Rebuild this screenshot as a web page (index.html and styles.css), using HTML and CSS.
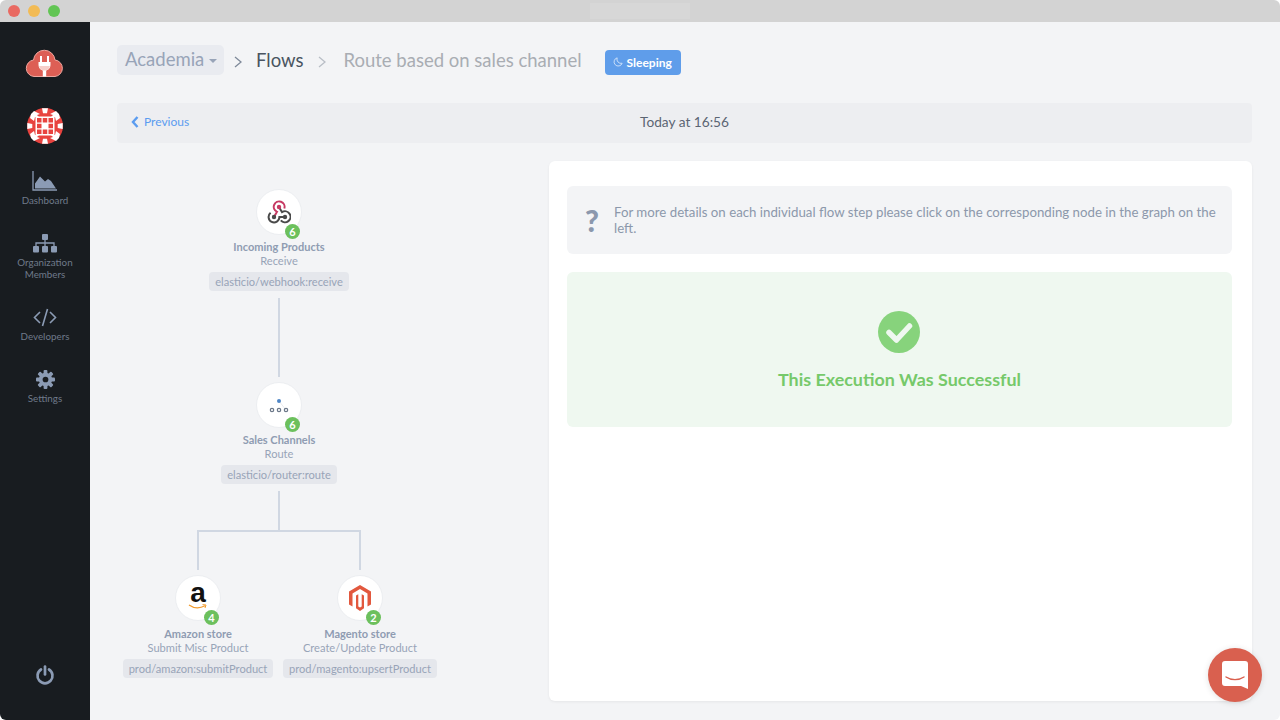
FILE: index.html
```html
<!DOCTYPE html>
<html>
<head>
  <title>Route based on sales channel</title>
  <link rel="stylesheet" href="styles.css">
</head>
<body>
<div class="window">
  <div class="titlebar">
    <span class="light red"></span>
    <span class="light yellow"></span>
    <span class="light green"></span>
    <span class="title-tab"></span>
  </div>

  <div class="app">
    <nav class="sidebar">
      <svg class="logo" viewBox="0 0 40 30" width="40" height="30">
        <path d="M9 28.500A8.300 8.300 0 0 1 8.500 12A10.800 10.800 0 0 1 30 12A8.300 8.300 0 0 1 30 28.500z" fill="#dd5f55" stroke="#f0a79f" stroke-width="1"/>
        <path d="M16 8v6M23 8v6" stroke="#fff" stroke-width="2"/>
        <path d="M13.500 14h12v3a6 6 0 0 1-4.300 5.500v6h-3.400v-6a6 6 0 0 1-4.300-5.500z" fill="#fff"/>
        <path d="M14 18h11a6 6 0 0 1-3.800 4.500h-3.400a6 6 0 0 1-3.800-4.500z" fill="#f6cfca"/>
      </svg>

      <svg class="avatar" viewBox="0 0 36 36" width="36" height="36">
        <circle cx="18" cy="18" r="18" fill="#e8433f"/>
        <g fill="#fff">
          <path d="M7 3l6 3-3 1 3 3-5-1-1 4-4-3 1-4z"/>
          <path d="M29 3l-6 3 3 1-3 3 5-1 1 4 4-3-1-4z"/>
          <path d="M7 33l6-3-3-1 3-3-5 1-1-4-4 3 1 4z"/>
          <path d="M29 33l-6-3 3-1-3-3 5 1 1-4 4 3-1 4z"/>
          <path d="M15 .3h6l-1 5h-4zM15 35.700h6l-1-5h-4zM.3 15v6l5-1v-4zM35.700 15v6l-5-1v-4z"/>
          <rect x="8.500" y="8.500" width="19" height="19" rx="1"/>
        </g>
        <g fill="#e8433f">
          <rect x="10" y="10" width="4.500" height="4.500"/>
          <rect x="15.750" y="10" width="4.500" height="4.500"/>
          <rect x="21.500" y="10" width="4.500" height="4.500"/>
          <rect x="10" y="15.750" width="4.500" height="4.500"/>
          <rect x="21.500" y="15.750" width="4.500" height="4.500"/>
          <rect x="10" y="21.500" width="4.500" height="4.500"/>
          <rect x="15.750" y="21.500" width="4.500" height="4.500"/>
          <rect x="21.500" y="21.500" width="4.500" height="4.500"/>
        </g>
      </svg>

      <a class="nav-item">
        <svg viewBox="0 0 26 20" width="26" height="20">
          <path d="M1 0v19h24" fill="none" stroke="#8b9bb4" stroke-width="1.300"/>
          <path d="M3 17.500v-5l5-7 5 5 3-2.500 3 2 5 7.500z" fill="#8b9bb4"/>
        </svg>
        <span>Dashboard</span>
      </a>
      <a class="nav-item">
        <svg viewBox="0 0 24 19" width="24" height="19">
          <g fill="#8b9bb4">
            <rect x="9" y="0" width="6" height="6" rx="1"/>
            <rect x="0" y="12" width="6" height="6.500" rx="1"/>
            <rect x="9" y="12" width="6" height="6.500" rx="1"/>
            <rect x="18" y="12" width="6" height="6.500" rx="1"/>
          </g>
          <path d="M12 6v6M3 12V9h18v3" fill="none" stroke="#8b9bb4" stroke-width="1.300"/>
        </svg>
        <span>Organization<br>Members</span>
      </a>
      <a class="nav-item">
        <svg viewBox="0 0 24 19" width="24" height="19">
          <path d="M7 4l-5.500 5.500L7 15M17 4l5.500 5.500L17 15M14.500 1l-5 17" fill="none" stroke="#8b9bb4" stroke-width="1.600"/>
        </svg>
        <span>Developers</span>
      </a>
      <a class="nav-item">
        <svg viewBox="0 0 20 20" width="19" height="19">
          <g fill="#8b9bb4">
            <rect x="8" y="0" width="4" height="20" rx="1"/>
            <rect x="8" y="0" width="4" height="20" rx="1" transform="rotate(45 10 10)"/>
            <rect x="8" y="0" width="4" height="20" rx="1" transform="rotate(90 10 10)"/>
            <rect x="8" y="0" width="4" height="20" rx="1" transform="rotate(135 10 10)"/>
          </g>
          <circle cx="10" cy="10" r="5.200" fill="none" stroke="#8b9bb4" stroke-width="3.600"/>
          <circle cx="10" cy="10" r="3" fill="#181c20"/>
        </svg>
        <span>Settings</span>
      </a>

      <svg class="power" viewBox="0 0 20 20" width="20" height="20">
        <path d="M6 4.500a7.500 7.500 0 1 0 8 0" fill="none" stroke="#8b9bb4" stroke-width="2.700" stroke-linecap="round"/>
        <path d="M10 1.500v8" stroke="#8b9bb4" stroke-width="2.700" stroke-linecap="round"/>
      </svg>
    </nav>

    <main class="main">
      <div class="breadcrumb">
        <a class="crumb-org">Academia <i class="caret"></i></a>
        <svg class="crumb-sep" viewBox="0 0 8 12" width="8" height="12"><path d="M1 1l6 5-6 5" fill="none" stroke="#7f8a9a" stroke-width="1.300"/></svg>
        <span class="crumb-flows">Flows</span>
        <svg class="crumb-sep" viewBox="0 0 8 12" width="8" height="12"><path d="M1 1l6 5-6 5" fill="none" stroke="#b9bec6" stroke-width="1.300"/></svg>
        <span class="crumb-current">Route based on sales channel</span>
        <span class="status-badge">
          <svg viewBox="0 0 12 12" width="10" height="10"><path d="M5 1a5 5 0 1 0 6 6.500A5 5 0 0 1 5 1z" fill="none" stroke="#dbe9fb" stroke-width="1"/></svg>
          Sleeping
        </span>
      </div>

      <div class="exec-bar">
        <a class="prev-link">
          <svg viewBox="0 0 8 12" width="8" height="12"><path d="M6.500 1L2 6l4.500 5" fill="none" stroke="#5b9cf0" stroke-width="2.400"/></svg>
          Previous
        </a>
        <span class="exec-time">Today at 16:56</span>
      </div>

      <div class="content">
        <section class="graph">
          <div class="node">
            <div class="node-icon">
              <svg viewBox="0 0 24 24" width="24" height="24">
                <path d="M7 17L10 11.800A5.400 5.400 0 1 1 17.300 8.500" fill="none" stroke="#c73a63" stroke-width="2"/>
                <path d="M12 7L15 12.200A5.500 5.500 0 1 1 13.800 20.400" fill="none" stroke="#4a4a4a" stroke-width="2"/>
                <path d="M18 17H12.400A5.400 5.400 0 1 1 3.600 12.800" fill="none" stroke="#4a4a4a" stroke-width="2"/>
                <circle cx="12" cy="7" r="2.200" fill="#c73a63"/>
                <circle cx="7" cy="17" r="2.200" fill="#4a4a4a"/>
                <circle cx="18" cy="17" r="2.200" fill="#4a4a4a"/>
              </svg>
              <span class="node-count">6</span>
            </div>
            <b class="node-title">Incoming Products</b>
            <span class="node-action">Receive</span>
            <span class="node-code">elasticio/webhook:receive</span>
          </div>
          <div class="edge"></div>
          <div class="node">
            <div class="node-icon">
              <svg viewBox="0 0 24 24" width="24" height="24">
                <path d="M12 8l7 9" stroke="#dfe2e7" stroke-width=".7"/>
                <circle cx="12" cy="8" r="2" fill="#4f86c6"/>
                <circle cx="5" cy="17" r="1.700" fill="none" stroke="#6b7788" stroke-width="1.200"/>
                <circle cx="12" cy="17" r="1.700" fill="none" stroke="#6b7788" stroke-width="1.200"/>
                <circle cx="19" cy="17" r="1.700" fill="none" stroke="#6b7788" stroke-width="1.200"/>
              </svg>
              <span class="node-count">6</span>
            </div>
            <b class="node-title">Sales Channels</b>
            <span class="node-action">Route</span>
            <span class="node-code">elasticio/router:route</span>
          </div>
          <div class="edge edge-short"></div>
          <div class="branch"></div>
          <div class="node-row">
            <div class="node">
              <div class="node-icon">
                <span class="amazon-a">a</span>
                <svg class="amazon-smile" viewBox="0 0 20 6" width="20" height="6">
                  <path d="M1 1c5 3.500 11 3.500 16 .8" fill="none" stroke="#f29b2c" stroke-width="1.300"/>
                  <path d="M14.500 .6l3.500 .4-1 3" fill="none" stroke="#f29b2c" stroke-width="1"/>
                </svg>
                <span class="node-count">4</span>
              </div>
              <b class="node-title">Amazon store</b>
              <span class="node-action">Submit Misc Product</span>
              <span class="node-code">prod/amazon:submitProduct</span>
            </div>
            <div class="node">
              <div class="node-icon">
                <svg viewBox="0 0 24 26" width="24" height="26">
                  <path d="M12 0L23 6.500v13l-3.500 2V8.500L12 4 4.500 8.500v13L1 19.500v-13z" fill="#e2583e"/>
                  <path d="M8 10.500l2.300-1.300v12.300l1.700 1 1.700-1V9.200l2.300 1.300v12.800L12 26l-4-2.700z" fill="#e2583e"/>
                </svg>
                <span class="node-count">2</span>
              </div>
              <b class="node-title">Magento store</b>
              <span class="node-action">Create/Update Product</span>
              <span class="node-code">prod/magento:upsertProduct</span>
            </div>
          </div>
        </section>

        <section class="panel">
          <div class="info-box">
            <span class="info-mark">?</span>
            <p>For more details on each individual flow step please click on the corresponding node in the graph on the left.</p>
          </div>
          <div class="success-box">
            <svg viewBox="0 0 42 42" width="42" height="42">
              <circle cx="21" cy="21" r="21" fill="#87d37c"/>
              <path d="M11 21.500l7.500 7.500L31.500 15" fill="none" stroke="#eff8f0" stroke-width="5.500" stroke-linecap="round" stroke-linejoin="round"/>
            </svg>
            <h2>This Execution Was Successful</h2>
          </div>
        </section>
      </div>
    </main>
  </div>

  <a class="chat-button">
    <svg viewBox="0 0 26 28" width="26" height="28">
      <path d="M3 0h20a3 3 0 0 1 3 3v25l-7-3H3a3 3 0 0 1-3-3V3a3 3 0 0 1 3-3z" fill="#fff"/>
      <path d="M4 16c5 3.500 13 3.500 18 0" fill="none" stroke="#d9604f" stroke-width="1.400" stroke-linecap="round"/>
    </svg>
  </a>
</div>
</body>
</html>
```

FILE: styles.css
```css
html, body {
  margin: 0;
  height: 100%;
  background: #fff;
  overflow: hidden;
}
body {
  font-family: "Lato", "Noto Sans", sans-serif;
}
p, h2 {
  margin: 0;
}

.window {
  position: relative;
  display: flex;
  flex-direction: column;
  height: 720px;
  border-radius: 6px;
  overflow: hidden;
}

.titlebar {
  display: flex;
  align-items: center;
  gap: 8px;
  flex: none;
  height: 22px;
  padding-left: 8px;
  background: #d3d3d3;
}
.light {
  width: 12px;
  height: 12px;
  border-radius: 50%;
}
.red { background: #e96a62; }
.yellow { background: #f2bb55; }
.green { background: #62c554; }
.title-tab {
  width: 100px;
  height: 16px;
  margin-left: 522px;
  background: #d7d7d7;
}

.app {
  display: flex;
  flex: 1;
  min-height: 0;
}

.sidebar {
  display: flex;
  flex-direction: column;
  align-items: center;
  flex: none;
  width: 90px;
  background: #181c20;
  padding-top: 26px;
  box-sizing: border-box;
}
.logo {
  margin-bottom: 30px;
}
.avatar {
  margin-bottom: 27px;
}
.nav-item {
  display: flex;
  flex-direction: column;
  align-items: center;
  gap: 3px;
  margin-bottom: 28px;
  color: #6f7a8a;
  font-size: 9.800px;
  line-height: 12px;
  text-align: center;
}
.power {
  margin-top: auto;
  margin-bottom: 35px;
}

.main {
  flex: 1;
  min-width: 0;
  background: #f3f4f6;
  padding: 23px 28px 19px 27px;
  box-sizing: border-box;
  display: flex;
  flex-direction: column;
}

.breadcrumb {
  display: flex;
  align-items: center;
  height: 30px;
  font-size: 18.500px;
}
.crumb-org {
  display: flex;
  align-items: center;
  gap: 5px;
  box-sizing: border-box;
  width: 107px;
  height: 30px;
  padding: 0 0 2px 8px;
  background: #e9ebf0;
  border-radius: 5px;
  color: #98a4b8;
}
.caret {
  width: 0;
  height: 0;
  margin-top: 3px;
  border-left: 4px solid transparent;
  border-right: 4px solid transparent;
  border-top: 4px solid #98a4b8;
}
.crumb-sep {
  margin: 4px 14px 0 10px;
}
.crumb-flows {
  color: #4a5461;
  margin-right: 15px;
}
.crumb-flows + .crumb-sep {
  margin: 4px 17px 0 0;
}
.crumb-current {
  color: #a9adb3;
  margin-right: 23px;
}
.status-badge {
  display: flex;
  align-items: center;
  gap: 4px;
  height: 25px;
  margin-top: 4px;
  padding: 0 9px 0 8px;
  background: #5f9dea;
  border-radius: 4px;
  color: #fff;
  font-size: 12px;
  font-weight: 700;
}

.exec-bar {
  position: relative;
  display: flex;
  align-items: center;
  justify-content: center;
  box-sizing: border-box;
  height: 40px;
  margin-top: 28px;
  padding-bottom: 3px;
  background: #edeef1;
  border-radius: 4px;
}
.prev-link {
  position: absolute;
  left: 14px;
  display: flex;
  align-items: center;
  gap: 5px;
  color: #5b9cf0;
  font-size: 12px;
}
.exec-time {
  color: #5b6573;
  font-size: 13.700px;
}

.content {
  display: flex;
  flex: 1;
  min-height: 0;
  margin-top: 18px;
}

.graph {
  display: flex;
  flex-direction: column;
  align-items: center;
  flex: none;
  width: 324px;
  padding-top: 28px;
  margin-right: 108px;
}
.node {
  display: flex;
  flex-direction: column;
  align-items: center;
  color: #98a4b8;
  font-size: 11.100px;
  white-space: nowrap;
}
.node-icon {
  position: relative;
  display: flex;
  flex-direction: column;
  align-items: center;
  justify-content: center;
  box-sizing: border-box;
  width: 46px;
  height: 46px;
  background: #fff;
  border: 1px solid #eceef1;
  border-radius: 50%;
  margin-bottom: 5px;
}
.node-count {
  position: absolute;
  left: 28px;
  top: 34px;
  width: 15px;
  height: 15px;
  border-radius: 50%;
  background: #6cc05d;
  color: #fff;
  font-size: 11px;
  font-weight: 700;
  line-height: 15px;
  text-align: center;
}
.node-title {
  line-height: 14px;
  font-size: 11px;
  font-weight: 700;
  color: #8f9cb2;
}
.node-action {
  line-height: 14px;
}
.node-code {
  margin-top: 4px;
  height: 19px;
  line-height: 19px;
  padding: 0 6px;
  background: #e5e7ec;
  border-radius: 4px;
}
.edge {
  width: 2px;
  height: 79px;
  margin: 7px 0 5px;
  background: #d0d7e2;
}
.edge-short {
  height: 39px;
  margin-bottom: 0;
}
.branch {
  box-sizing: border-box;
  width: 164px;
  height: 40px;
  border: 2px solid #d0d7e2;
  border-bottom: none;
  margin-bottom: 5px;
}
.node-row {
  display: flex;
  width: 324px;
}
.node-row .node {
  flex: 0 0 162px;
  min-width: 0;
}
.node-row .node-icon {
  margin-bottom: 6px;
}
.amazon-a {
  margin-top: -5px;
  color: #111;
  font-family: "Liberation Sans", sans-serif;
  font-size: 28px;
  font-weight: 700;
  line-height: 24px;
}
.amazon-smile {
  margin-top: -1px;
}

.panel {
  flex: 1;
  min-width: 0;
  background: #fff;
  border-radius: 6px;
  box-shadow: 0 1px 3px rgba(0, 0, 0, .06);
  padding: 25px 20px 0 18px;
}
.info-box {
  display: flex;
  align-items: center;
  gap: 13px;
  box-sizing: border-box;
  height: 68px;
  padding: 0 14px 0 16px;
  background: #f3f4f6;
  border-radius: 6px;
  color: #8c98ab;
  font-size: 13.250px;
  line-height: 16px;
}
.info-mark {
  flex: none;
  width: 18px;
  color: #8b98ad;
  font-size: 30px;
  font-weight: 900;
  text-align: center;
}
.success-box {
  display: flex;
  flex-direction: column;
  align-items: center;
  box-sizing: border-box;
  height: 155px;
  margin-top: 18px;
  padding-top: 39px;
  background: #eff8f0;
  border-radius: 6px;
}
.success-box svg {
  margin-right: 1px;
}
.success-box h2 {
  margin-top: 15px;
  color: #76c96a;
  font-size: 17.900px;
  font-weight: 700;
}

.chat-button {
  position: absolute;
  right: 18px;
  bottom: 18px;
  display: flex;
  align-items: center;
  justify-content: center;
  width: 54px;
  height: 54px;
  background: #d9604f;
  border-radius: 50%;
  box-shadow: 0 1px 6px rgba(0, 0, 0, .12);
}
```
